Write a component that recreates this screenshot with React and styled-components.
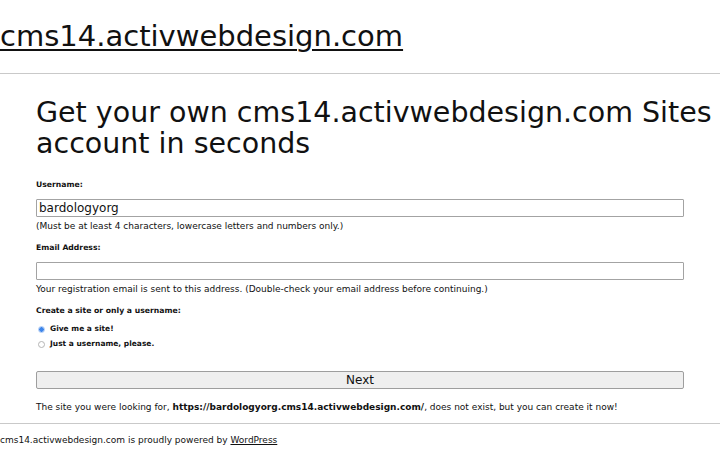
import React from 'react';
import styled, {createGlobalStyle} from 'styled-components';

const GlobalStyle = createGlobalStyle`
  html, body {
    margin: 0;
    padding: 0;
    background: #fff;
  }

  body {
    font-family: "DejaVu Sans", "Liberation Sans", sans-serif;
    color: #111;
  }
`;

const Header = styled.header`
  padding: 19px 0 20px;
`;

const SiteTitle = styled.a`
  display: inline-block;
  font-size: 29px;
  line-height: 34px;
  color: #111;
  text-decoration: underline;
  text-underline-offset: 3px;
  text-decoration-thickness: 2px;
`;

const Divider = styled.hr`
  margin: 0;
  border: 0;
  border-top: 1px solid #c9c9c9;
`;

const Main = styled.main`
  width: 90%;
  margin: 0 auto;
  padding: 23px 0 10px;
`;

// the heading runs past the form column on the right
const PageTitle = styled.h2`
  margin: 0 -36px 21px 0;
  font-size: 28.5px;
  font-weight: normal;
  line-height: 31px;
`;

const Form = styled.form`
  display: flex;
  flex-direction: column;
`;

const Label = styled.label`
  display: block;
  font-size: 7.7px;
  font-weight: bold;
  line-height: 10px;
  margin-top: ${(p) => (p.$first ? '0' : '11px')};
`;

const TextInput = styled.input`
  box-sizing: border-box;
  width: 100%;
  height: 18px;
  margin: 9px 0 0;
  padding: 0 2px;
  border: 1px solid #a3a3a3;
  border-radius: 1px;
  font-family: inherit;
  font-size: 12px;
  color: #111;
  background: #fff;
  outline: none;
`;

const Hint = styled.p`
  margin: 4px 0 0;
  font-size: 9px;
  line-height: 11px;
`;

const RadioList = styled.div`
  display: flex;
  flex-direction: column;
  gap: 5px;
  margin-top: 8px;
`;

const RadioRow = styled.label`
  display: flex;
  align-items: center;
  gap: 5px;
  padding-left: 2px;
  font-size: 7.5px;
  font-weight: bold;
  line-height: 10px;
`;

const Radio = styled.input`
  appearance: none;
  box-sizing: border-box;
  width: 7px;
  height: 7px;
  margin: 0;
  border-radius: 50%;
  border: 1px solid #b5b5b5;
  background: #fff;

  &:checked {
    border-color: #a9c8f5;
    background: radial-gradient(circle, #3d85ea 0 2px, #a9c8f5 2.5px);
  }
`;

const SubmitButton = styled.button`
  width: 100%;
  height: 18px;
  margin-top: 22px;
  padding: 0;
  border: 1px solid #9e9e9e;
  border-radius: 2px;
  background: #efefef;
  font-family: inherit;
  font-size: 12px;
  line-height: 16px;
  color: #111;
`;

const Notice = styled.p`
  margin: 13px 0 0;
  font-size: 9px;
  line-height: 11px;

  b {
    font-weight: bold;
  }
`;

const Footer = styled.footer`
  padding: 11px 0 10px;
  font-size: 9px;
  line-height: 11px;

  a {
    color: #111;
  }
`;

function App() {
  return (
    <>
      <GlobalStyle />
      <Header>
        <SiteTitle href="#">cms14.activwebdesign.com</SiteTitle>
      </Header>
      <Divider />
      <Main>
        <PageTitle>Get your own cms14.activwebdesign.com Sites account in seconds</PageTitle>
        <Form onSubmit={(e) => e.preventDefault()}>
          <Label $first htmlFor="user_name">Username:</Label>
          <TextInput id="user_name" type="text" defaultValue="bardologyorg" />
          <Hint>(Must be at least 4 characters, lowercase letters and numbers only.)</Hint>

          <Label htmlFor="user_email">Email Address:</Label>
          <TextInput id="user_email" type="email" defaultValue="" />
          <Hint>Your registration email is sent to this address. (Double-check your email address before continuing.)</Hint>

          <Label>Create a site or only a username:</Label>
          <RadioList>
            <RadioRow>
              <Radio type="radio" name="signup_for" value="blog" defaultChecked />
              Give me a site!
            </RadioRow>
            <RadioRow>
              <Radio type="radio" name="signup_for" value="user" />
              Just a username, please.
            </RadioRow>
          </RadioList>

          <SubmitButton type="submit">Next</SubmitButton>
        </Form>
        <Notice>
          The site you were looking for, <b>https://bardologyorg.cms14.activwebdesign.com/</b>, does not exist, but you can create it now!
        </Notice>
      </Main>
      <Divider />
      <Footer>
        cms14.activwebdesign.com is proudly powered by <a href="#">WordPress</a>
      </Footer>
    </>
  );
}

export default App;
